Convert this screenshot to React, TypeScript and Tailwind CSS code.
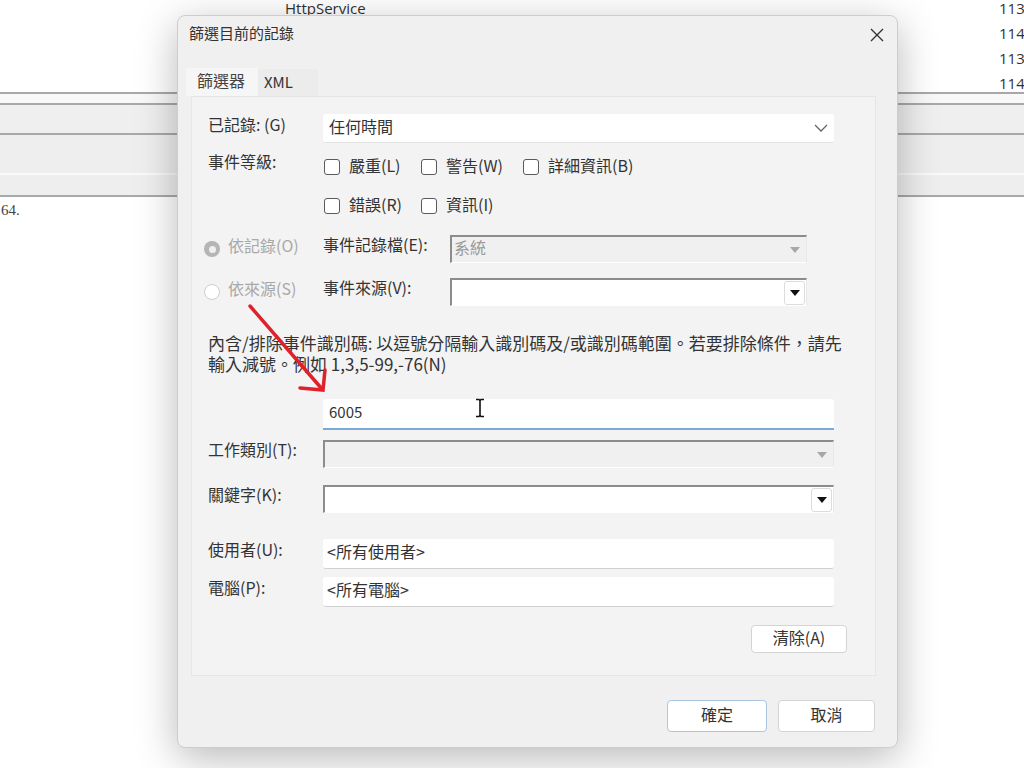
import React from 'react';

const font = "font-['Noto_Sans_CJK_TC','Noto_Sans',sans-serif]";

const Checkbox: React.FC<{ label: string; w: string }> = ({ label, w }) => (
  <div className={`flex items-center gap-[9px] ${w}`}>
    <span className="w-[16px] h-[16px] rounded-[3px] border border-[#5a5a5a] bg-white" />
    <span className="-mt-[4px]">{label}</span>
  </div>
);

const Radio: React.FC<{ label: string; checked?: boolean }> = ({ label, checked }) => (
  <div className="flex items-center gap-[8px] text-[#a8a8a8] w-[131px] pl-[12px]">
    {checked ? (
      <span className="w-[16px] h-[16px] rounded-full bg-[#b5b5b5] flex items-center justify-center">
        <span className="w-[7px] h-[7px] rounded-full bg-[#f0f0f0]" />
      </span>
    ) : (
      <span className="w-[16px] h-[16px] rounded-full border border-[#cfcfcf] bg-white" />
    )}
    <span className="-mt-[8px]">{label}</span>
  </div>
);

const ClassicCombo: React.FC<{ disabled?: boolean; text?: string; className?: string }> = ({
  disabled,
  text,
  className = '',
}) => (
  <div
    className={`h-[28px] flex items-center border-t-2 border-l-2 border-[#8c8c8c] border-r border-b border-r-[#e8e8e8] border-b-[#ffffff] ${
      disabled ? 'bg-[#f0f0f0]' : 'bg-white'
    } ${className}`}
  >
    <span className="flex-1 pl-[2px] -mt-[6px] text-[#9a9a9a]">{text}</span>
    <span
      className={`mr-[1px] w-[21px] h-[24px] rounded-[3px] flex items-center justify-center ${
        disabled ? 'bg-[#f0f0f0]' : 'bg-white border border-[#dcdcdc]'
      }`}
    >
      <svg width="10" height="6" viewBox="0 0 10 6">
        <path d="M0 0h10L5 6z" fill={disabled ? '#a8a8a8' : '#111'} />
      </svg>
    </span>
  </div>
);

const Button: React.FC<{ label: string; primary?: boolean; className?: string }> = ({
  label,
  primary,
  className = '',
}) => (
  <div
    className={`flex items-center justify-center rounded-[4px] bg-white text-[#333] ${
      primary ? 'border border-[#a9c7e3]' : 'border border-[#d4d4d4]'
    } ${className}`}
  >
    <span className="-mt-[4px]">{label}</span>
  </div>
);

const Label: React.FC<{ children: React.ReactNode; w?: string }> = ({ children, w = 'w-[115px]' }) => (
  <span className={`${w} -mt-[10px]`}>{children}</span>
);

export default function App() {
  return (
    <div className={`relative w-[1024px] h-[768px] overflow-hidden bg-white ${font} text-[16px] text-[#222]`}>
      {/* background list */}
      <div className="h-[92px] overflow-hidden">
        <div className="-mt-[4px] text-[15px] text-[#333] font-['Open_Sans',sans-serif]">
          {['113', '114', '113', '114'].map((n, i) => (
            <div key={i} className="h-[25px] flex items-center">
              <span className="w-[285px]" />
              <span>{i === 0 ? 'HttpService' : ''}</span>
              <span className="ml-auto w-[25px]">{n}</span>
            </div>
          ))}
        </div>
      </div>
      <div className="h-[2px] bg-[#a8a8a8]" />
      <div className="h-[9px] bg-[#f8f8f8]" />
      <div className="h-[2px] bg-[#a8a8a8]" />
      <div className="h-[28px] bg-[#efefef]" />
      <div className="h-[2px] bg-[#a8a8a8]" />
      <div className="h-[38px] bg-[#eeeeee]" />
      <div className="h-[2px] bg-[#fafafa]" />
      <div className="h-[20px] bg-[#eeeeee]" />
      <div className="h-[2px] bg-[#a8a8a8]" />
      <div className="pt-[2px] pl-[1px] font-['Liberation_Serif',serif] text-[15px] text-[#444]">64.</div>

      {/* dialog */}
      <div className="absolute left-[177px] top-[15px] w-[721px] h-[733px] rounded-[8px] bg-[#f0f0f0] border border-[#cdcdcd] shadow-[0_10px_40px_rgba(0,0,0,0.28)] flex flex-col">
        <div className="h-[37px] flex items-center pl-[11px] pr-[13px] text-[15px] text-[#333]">
          <span className="-mt-[2px]">篩選目前的記錄</span>
          <svg className="ml-auto" width="14" height="14" viewBox="0 0 14 14">
            <path d="M1 1l12 12M13 1L1 13" stroke="#333" strokeWidth="1.4" />
          </svg>
        </div>

        {/* tabs */}
        <div className="mt-[15px] ml-[8px] flex items-end h-[28px]">
          <div className="h-[28px] w-[72px] bg-[#f6f6f6] flex items-center pl-[11px] text-[#444]">
            <span className="-mt-[4px]">篩選器</span>
          </div>
          <div className="h-[27px] w-[60px] bg-[#ececec] flex items-center pl-[6px] text-[15px] text-[#333]">XML</div>
        </div>

        {/* panel */}
        <div className="ml-[13px] w-[685px] h-[580px] bg-[#f3f3f3] border border-[#e6e6e6] flex flex-col pl-[16px] pt-[17px] text-[#333]">
          <div className="flex items-center">
            <Label>已記錄: (G)</Label>
            <div className="w-[511px] h-[29px] bg-white border-b border-[#e2e2e2] rounded-[3px] flex items-center pl-[6px] pr-[6px]">
              <span className="flex-1 -mt-[4px]">任何時間</span>
              <svg width="14" height="8" viewBox="0 0 14 8">
                <path d="M1 1l6 6 6-6" fill="none" stroke="#666" strokeWidth="1.3" />
              </svg>
            </div>
          </div>

          <div className="flex mt-[12px]">
            <span className="w-[116px] -mt-[6px]">事件等級:</span>
            <div className="flex flex-col gap-[15px]">
              <div className="flex h-[24px]">
                <Checkbox label="嚴重(L)" w="w-[97px]" />
                <Checkbox label="警告(W)" w="w-[102px]" />
                <Checkbox label="詳細資訊(B)" w="w-[120px]" />
              </div>
              <div className="flex h-[24px]">
                <Checkbox label="錯誤(R)" w="w-[97px]" />
                <Checkbox label="資訊(I)" w="w-[102px]" />
              </div>
            </div>
          </div>

          <div className="flex items-center mt-[17px] -ml-[16px]">
            <Radio label="依記錄(O)" checked />
            <Label w="w-[127px]">事件記錄檔(E):</Label>
            <ClassicCombo disabled text="系統" className="w-[357px]" />
          </div>
          <div className="flex items-center mt-[15px] -ml-[16px]">
            <Radio label="依來源(S)" />
            <Label w="w-[127px]">事件來源(V):</Label>
            <ClassicCombo className="w-[357px]" />
          </div>

          <div className="mt-[26px] leading-[21px] w-[660px] text-[17px]">
            內含/排除事件識別碼: 以逗號分隔輸入識別碼及/或識別碼範圍。若要排除條件，請先
            <br />
            輸入減號。例如 1,3,5-99,-76(N)
          </div>

          <div className="flex mt-[25px]">
            <span className="w-[115px]" />
            <div className="w-[511px] h-[31px] bg-white border-b-2 border-[#7ea9d6] rounded-t-[3px] flex items-center pl-[6px] text-[15px]">
              <span className="-mt-[3px]">6005</span>
            </div>
          </div>

          <div className="flex items-center mt-[10px]">
            <Label>工作類別(T):</Label>
            <ClassicCombo disabled className="w-[511px]" />
          </div>
          <div className="flex items-center mt-[17px]">
            <Label>關鍵字(K):</Label>
            <ClassicCombo className="w-[511px]" />
          </div>

          <div className="flex items-center mt-[26px]">
            <Label>使用者(U):</Label>
            <div className="w-[511px] h-[30px] bg-white border-b border-[#d0d0d0] rounded-[3px] flex items-center pl-[4px] text-[16px]">
              <span className="-mt-[5px]">&lt;所有使用者&gt;</span>
            </div>
          </div>
          <div className="flex items-center mt-[8px]">
            <Label>電腦(P):</Label>
            <div className="w-[511px] h-[30px] bg-white border-b border-[#d0d0d0] rounded-[3px] flex items-center pl-[4px] text-[16px]">
              <span className="-mt-[5px]">&lt;所有電腦&gt;</span>
            </div>
          </div>

          <div className="flex justify-end mt-[18px] pr-[28px]">
            <Button label="清除(A)" className="w-[96px] h-[28px]" />
          </div>
        </div>

        <div className="flex justify-end gap-[11px] mt-[24px] pr-[22px]">
          <Button label="確定" primary className="w-[100px] h-[32px]" />
          <Button label="取消" className="w-[97px] h-[32px]" />
        </div>
      </div>

      {/* I-beam cursor */}
      <svg className="absolute left-[474px] top-[398px]" width="12" height="20" viewBox="0 0 12 20">
        <path d="M2 1.5h3l1 1 1-1h3M6 2.5v15M2 18.5h3l1-1 1 1h3" fill="none" stroke="#111" strokeWidth="1.6" />
      </svg>

      {/* red annotation arrow */}
      <svg className="absolute left-0 top-0 pointer-events-none" width="1024" height="768">
        <g stroke="#e0202a" strokeWidth="3.5" strokeLinecap="round" fill="none">
          <path d="M250 306L322 389" />
          <path d="M300 388L323 390L325 370" />
        </g>
      </svg>
    </div>
  );
}
